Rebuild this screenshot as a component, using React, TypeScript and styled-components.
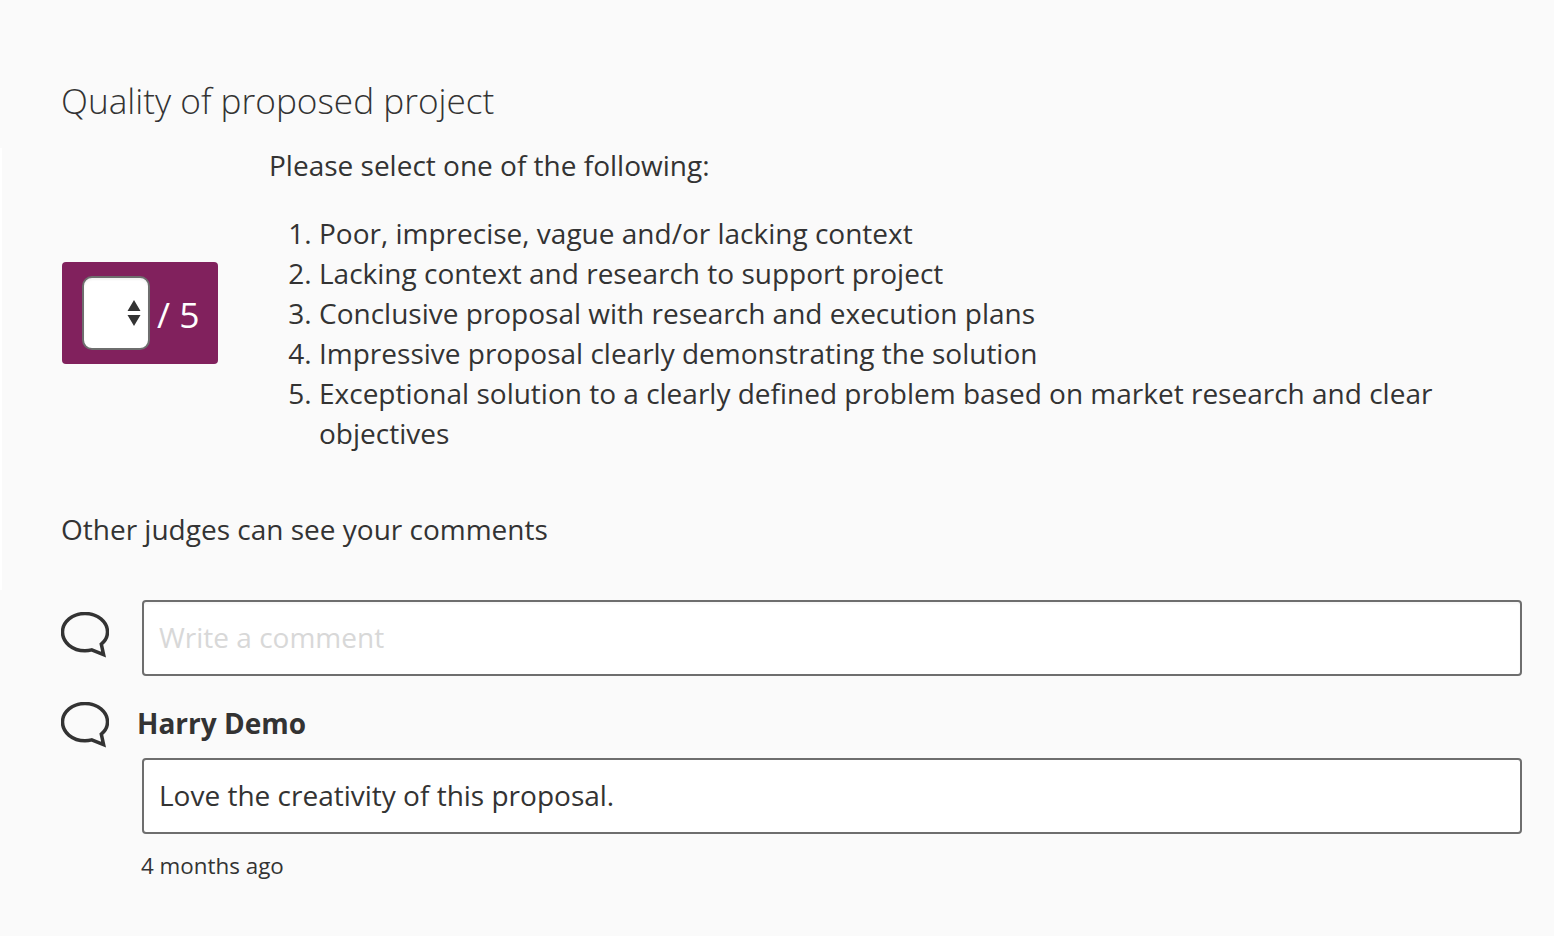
import React from "react";
import styled, { createGlobalStyle } from "styled-components";

const criteria = [
  "Poor, imprecise, vague and/or lacking context",
  "Lacking context and research to support project",
  "Conclusive proposal with research and execution plans",
  "Impressive proposal clearly demonstrating the solution",
  "Exceptional solution to a clearly defined problem based on market research and clear objectives",
];

const BubbleIcon: React.FC<{ top: number }> = ({ top }) => (
  <Bubble $top={top} viewBox="0 0 48 48" width="48" height="48" fill="none">
    <path
      d="M30.700 37.900C28.600 38.500 26.300 38.800 24 38.800 11.500 38.800 1.500 30.500 1.500 20.100 1.500 9.800 11.500 1.500 24 1.500 36.500 1.500 46.500 9.800 46.500 20.100 46.500 24.800 44.400 28.900 40.300 32.200L42.600 42.600Z"
      stroke="#333"
      strokeWidth="3.5"
      strokeLinejoin="miter"
    />
  </Bubble>
);

const App: React.FC = () => {
  return (
    <Page>
      <GlobalStyle />
      <Title>Quality of proposed project</Title>
      <ScoreRow>
        <ScoreBox>
          <ScoreInput>
            <svg width="14" height="26" viewBox="0 0 14 26">
              <path d="M7 0l6.500 11H.5zM7 26L.5 15h13z" fill="#333" />
            </svg>
          </ScoreInput>
          <ScoreMax>/ 5</ScoreMax>
        </ScoreBox>
        <Criteria>
          <Intro>Please select one of the following:</Intro>
          <CriteriaList>
            {criteria.map((item) => (
              <li key={item}>{item}</li>
            ))}
          </CriteriaList>
        </Criteria>
      </ScoreRow>
      <Note>Other judges can see your comments</Note>
      <CommentRow>
        <BubbleIcon top={12} />
        <CommentInput placeholder="Write a comment" />
      </CommentRow>
      <AuthorRow>
        <BubbleIcon top={6} />
        <Author>Harry Demo</Author>
      </AuthorRow>
      <CommentBody>
        <CommentText>Love the creativity of this proposal.</CommentText>
        <Time>4 months ago</Time>
      </CommentBody>
    </Page>
  );
};

export default App;

const GlobalStyle = createGlobalStyle`
  html, body {
    margin: 0;
    padding: 0;
    background-color: #fafafa;
  }
  body {
    font-family: "Open Sans", "Liberation Sans", sans-serif;
    color: #333;
  }
`;

const Page = styled.div`
  position: relative;
  width: 1554px;
  height: 936px;
  box-sizing: border-box;
  padding: 75px 32px 0 62px;
  overflow: hidden;

  /* faint lighter strip down the left edge */
  &::before {
    content: "";
    position: absolute;
    left: 0;
    top: 148px;
    width: 2px;
    height: 442px;
    background-color: #fff;
  }
`;

const Title = styled.h2`
  margin: 0 0 0 -1px;
  font-size: 35.2px;
  line-height: 50px;
  font-weight: 300;
  color: #333;
`;

const ScoreRow = styled.div`
  display: flex;
  align-items: center;
  gap: 51px;
  margin-top: 20px;
`;

const ScoreBox = styled.div`
  flex: none;
  width: 156px;
  height: 102px;
  margin-top: 28px;
  box-sizing: border-box;
  padding-left: 20px;
  display: flex;
  align-items: center;
  gap: 7px;
  background-color: #81215d;
  border-radius: 4px;
`;

const ScoreInput = styled.div`
  width: 68px;
  height: 74px;
  box-sizing: border-box;
  padding-right: 7px;
  display: flex;
  align-items: center;
  justify-content: flex-end;
  background-color: #fff;
  border: 2px solid #6e6e6e;
  border-radius: 10px;
  box-shadow: inset 0 2px 2px rgba(0, 0, 0, 0.05);
`;

const ScoreMax = styled.span`
  padding-top: 2px;
  font-size: 35.5px;
  line-height: 40px;
  color: #fff;
`;

const Criteria = styled.div`
  flex: 1;
`;

const Intro = styled.p`
  margin: 0;
  font-size: 28px;
  line-height: 40px;
`;

const CriteriaList = styled.ol`
  margin: 28px 0 0;
  padding-left: 50px;
  font-size: 28px;
  line-height: 40px;
`;

const Note = styled.p`
  margin: 56px 0 0 -1px;
  font-size: 28px;
  line-height: 40px;
`;

const CommentRow = styled.div`
  display: flex;
  align-items: flex-start;
  gap: 33px;
  margin-top: 51px;
`;

const Bubble = styled.svg<{ $top: number }>`
  flex: none;
  margin-left: -1px;
  margin-top: ${(p) => p.$top}px;
`;

const CommentInput = styled.input`
  flex: 1;
  height: 76px;
  box-sizing: border-box;
  padding: 0 15px 2px;
  font-family: inherit;
  font-size: 28px;
  color: #333;
  background-color: #fff;
  border: 2px solid #6e6e6e;
  border-radius: 4px;
  outline: none;
  box-shadow: inset 0 2px 2px rgba(0, 0, 0, 0.03);
  &::placeholder {
    color: #d8d8d8;
  }
`;

const AuthorRow = styled.div`
  display: flex;
  align-items: center;
  gap: 28px;
  margin-top: 15px;
`;

const Author = styled.span`
  font-size: 28px;
  line-height: 64px;
  font-weight: 700;
`;

const CommentBody = styled.div`
  margin-left: 80px;
  margin-top: 3px;
`;

const CommentText = styled.div`
  height: 76px;
  box-sizing: border-box;
  padding: 0 15px 2px;
  display: flex;
  align-items: center;
  font-size: 28px;
  background-color: #fff;
  border: 2px solid #6e6e6e;
  border-radius: 4px;
`;

const Time = styled.div`
  margin: 16px 0 0 -1px;
  font-size: 22.4px;
  line-height: 32px;
`;
